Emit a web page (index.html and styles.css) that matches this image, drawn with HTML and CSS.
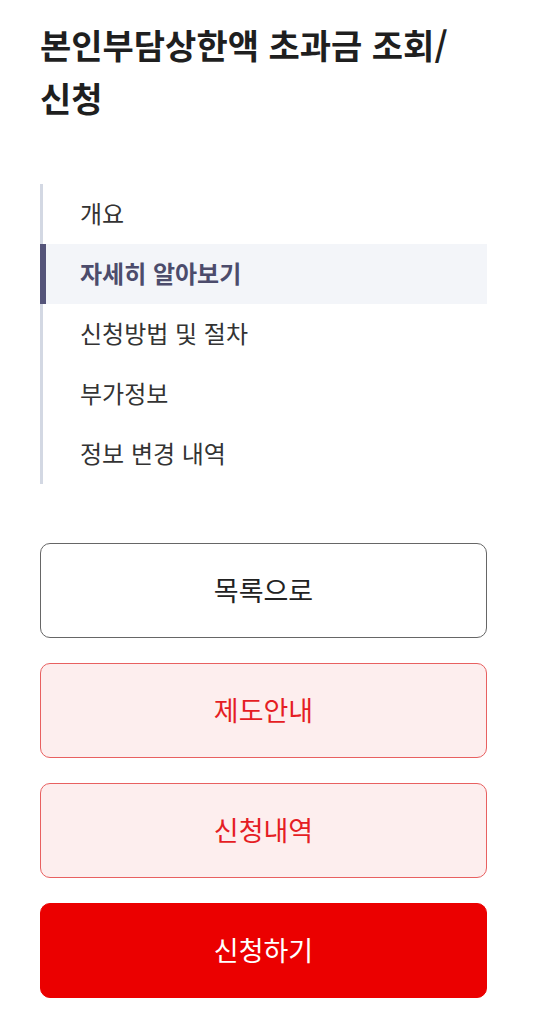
FILE: index.html
```html
<!DOCTYPE html>
<html lang="ko">
<head>
    <meta charset="UTF-8">
    <meta name="viewport" content="width=device-width, initial-scale=1.0">
    <title>본인부담상한액 초과금 조회/신청</title>
    <link rel="stylesheet" href="styles.css">
</head>
<body>
    <div class="page">
        <h1 class="title">본인부담상한액 초과금 조회/<br>신청</h1>

        <ul class="toc">
            <li class="toc-item">개요</li>
            <li class="toc-item active">자세히 알아보기</li>
            <li class="toc-item">신청방법 및 절차</li>
            <li class="toc-item">부가정보</li>
            <li class="toc-item">정보 변경 내역</li>
        </ul>

        <div class="actions">
            <button class="btn btn-line">목록으로</button>
            <button class="btn btn-soft">제도안내</button>
            <button class="btn btn-soft">신청내역</button>
            <button class="btn btn-primary">신청하기</button>
        </div>
    </div>
</body>
</html>
```

FILE: styles.css
```css
* {
    box-sizing: border-box;
}
body {
    margin: 0;
    background-color: #FFFFFF;
    font-family: "Noto Sans CJK KR", "Noto Sans", sans-serif;
    color: #222222;
}
.page {
    width: 447px;
    margin-left: 40px;
    padding-top: 18px;
}
.title {
    margin: 0;
    font-size: 34px;
    line-height: 53px;
    font-weight: 700;
    color: #1f1f1f;
}
.toc {
    list-style: none;
    margin: 60px 0 0;
    padding: 0;
    border-left: 3px solid #d3d8e3;
}
.toc-item {
    height: 60px;
    display: flex;
    align-items: center;
    padding-left: 37px;
    padding-bottom: 3px;
    font-size: 24px;
    color: #333333;
}
.toc-item.active {
    margin-left: -3px;
    padding-left: 34px;
    border-left: 6px solid #55557a;
    background-color: #f3f5f9;
    color: #4c4c6c;
    font-weight: 700;
}
.actions {
    margin-top: 59px;
    display: flex;
    flex-direction: column;
    gap: 25px;
}
.btn {
    height: 95px;
    width: 100%;
    border-radius: 10px;
    font-family: inherit;
    font-size: 27px;
    font-weight: 400;
    padding-bottom: 3px;
    cursor: pointer;
}
.btn-line {
    background-color: #FFFFFF;
    border: 1px solid #666666;
    color: #222222;
}
.btn-soft {
    background-color: #fdeeee;
    border: 1px solid #e86060;
    color: #e51d24;
}
.btn-primary {
    background-color: #eb0000;
    border: 1px solid #eb0000;
    color: #FFFFFF;
}
```
